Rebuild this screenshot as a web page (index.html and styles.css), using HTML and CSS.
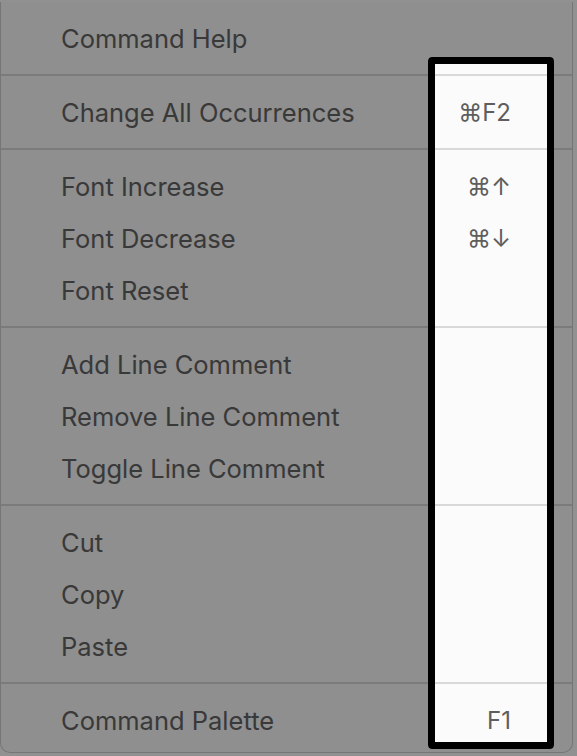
FILE: index.html
```html
<!DOCTYPE html>
<html>
  <head>
    <meta charset="UTF-8" />
    <meta name="viewport" content="width=device-width, initial-scale=1.0" />
    <title>Context Menu</title>
    <link rel="stylesheet" href="styles.css">
  </head>
  <body>
    <div class="menu">
      <div class="menu-item"><span class="label">Command Help</span><span class="key"></span></div>
      <div class="separator"></div>
      <div class="menu-item"><span class="label">Change All Occurrences</span><span class="key">⌘F2</span></div>
      <div class="separator"></div>
      <div class="menu-item"><span class="label">Font Increase</span><span class="key">⌘↑</span></div>
      <div class="menu-item"><span class="label">Font Decrease</span><span class="key">⌘↓</span></div>
      <div class="menu-item"><span class="label">Font Reset</span><span class="key"></span></div>
      <div class="separator"></div>
      <div class="menu-item"><span class="label">Add Line Comment</span><span class="key"></span></div>
      <div class="menu-item"><span class="label">Remove Line Comment</span><span class="key"></span></div>
      <div class="menu-item"><span class="label">Toggle Line Comment</span><span class="key"></span></div>
      <div class="separator"></div>
      <div class="menu-item"><span class="label">Cut</span><span class="key"></span></div>
      <div class="menu-item"><span class="label">Copy</span><span class="key"></span></div>
      <div class="menu-item"><span class="label">Paste</span><span class="key"></span></div>
      <div class="separator"></div>
      <div class="menu-item"><span class="label">Command Palette</span><span class="key">F1</span></div>
    </div>

    <!-- spotlight on the shortcut column -->
    <div class="highlight"></div>
  </body>
</html>
```

FILE: styles.css
```css
body {
  margin: 0;
  background-color: #ffffff;
  font-family: Inter, "Noto Sans", sans-serif;
  overflow: hidden;
}

.menu {
  width: 571px;
  margin-top: 2px;
  padding: 10px 0 6px 0;
  background-color: #fbfbfb;
  border: 1px solid #cfcfcf;
  border-top: none;
  border-radius: 0 0 10px 10px;
}

.menu-item {
  display: flex;
  justify-content: space-between;
  align-items: center;
  height: 52px;
  padding: 0 61px 0 60px;
}

.label {
  font-size: 25.5px;
  color: #646464;
}

.key {
  font-size: 24px;
  color: #5e5e5e;
}

.separator {
  height: 2px;
  margin: 10px 0;
  background-color: #d9d9d9;
}

.highlight {
  position: absolute;
  left: 428px;
  top: 57px;
  width: 112px;
  height: 678px;
  border: 7px solid #000000;
  border-radius: 4px;
  box-shadow: 0 0 0 1200px rgba(0, 0, 0, 0.43);
}
```
